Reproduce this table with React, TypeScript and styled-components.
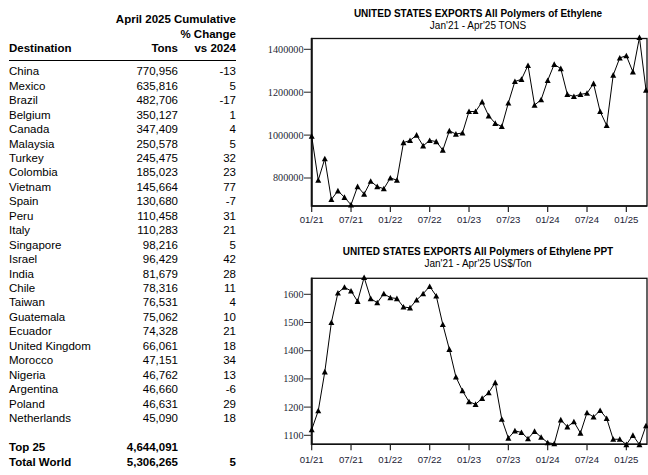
import React from "react";
import styled, { createGlobalStyle } from "styled-components";

const GlobalStyle = createGlobalStyle`
  html, body { margin: 0; padding: 0; background: #fff; }
  body { font-family: "Liberation Sans", Arial, sans-serif; color: #000; }
`;

const Page = styled.div`
  display: grid;
  grid-template-columns: 268px 380px;
  width: 648px;
  height: 475px;
  overflow: hidden;
`;

const TableWrap = styled.div`
  padding: 12.25px 0 0 9px;
  width: 227px;
  font-size: 11.5px;
`;

const HeadLine = styled.div`
  font-weight: bold;
  text-align: right;
  line-height: 14.5px;
`;

const Row = styled.div<{ $bold?: boolean; $h?: number }>`
  display: grid;
  grid-template-columns: 89px 80px 58px;
  line-height: ${(p) => p.$h ?? 14.46}px;
  font-weight: ${(p) => (p.$bold ? "bold" : "normal")};
  white-space: nowrap;
`;

const Cell = styled.span<{ $right?: boolean }>`
  text-align: ${(p) => (p.$right ? "right" : "left")};
`;

const Rule = styled.div`
  height: 1.3px;
  background: #000;
  margin: 4px 0 3.2px;
`;

const Spacer = styled.div`
  height: 14.25px;
`;

const ChartColumn = styled.div`
  display: flex;
  flex-direction: column;
  width: 380px;
`;

const ChartTitle = styled.div<{ $top: number }>`
  padding: ${(p) => p.$top}px 0 0 40px;
  text-align: center;
  font-size: 10px;
  line-height: 12px;
  white-space: nowrap;
`;

const TitleMain = styled.div`
  font-weight: bold;
`;

const TitleSub = styled.div`
  font-weight: normal;
`;

const ChartSvg = styled.svg`
  display: block;
  overflow: visible;
`;

const rows: [string, string, string][] = [
  ["China", "770,956", "-13"],
  ["Mexico", "635,816", "5"],
  ["Brazil", "482,706", "-17"],
  ["Belgium", "350,127", "1"],
  ["Canada", "347,409", "4"],
  ["Malaysia", "250,578", "5"],
  ["Turkey", "245,475", "32"],
  ["Colombia", "185,023", "23"],
  ["Vietnam", "145,664", "77"],
  ["Spain", "130,680", "-7"],
  ["Peru", "110,458", "31"],
  ["Italy", "110,283", "21"],
  ["Singapore", "98,216", "5"],
  ["Israel", "96,429", "42"],
  ["India", "81,679", "28"],
  ["Chile", "78,316", "11"],
  ["Taiwan", "76,531", "4"],
  ["Guatemala", "75,062", "10"],
  ["Ecuador", "74,328", "21"],
  ["United Kingdom", "66,061", "18"],
  ["Morocco", "47,151", "34"],
  ["Nigeria", "46,762", "13"],
  ["Argentina", "46,660", "-6"],
  ["Poland", "46,631", "29"],
  ["Netherlands", "45,090", "18"],
];

const tonsData = [
  995000, 790000, 890000, 700000, 740000, 710000, 675000, 760000, 725000, 785000,
  760000, 750000, 800000, 790000, 965000, 975000, 1000000, 950000, 975000, 970000,
  930000, 1020000, 1005000, 1010000, 1110000, 1110000, 1155000, 1090000, 1055000, 1040000,
  1150000, 1250000, 1260000, 1325000, 1140000, 1165000, 1255000, 1330000, 1310000, 1190000,
  1180000, 1190000, 1195000, 1240000, 1110000, 1045000, 1280000, 1360000, 1370000, 1295000,
  1455000, 1210000,
];

const priceData = [
  1120, 1187, 1325, 1500, 1605, 1625, 1612, 1575, 1660, 1585,
  1570, 1602, 1588, 1585, 1555, 1552, 1580, 1602, 1628, 1594,
  1493, 1405, 1307, 1258, 1219, 1210, 1231, 1251, 1287, 1157,
  1090, 1116, 1110, 1088, 1114, 1093, 1074, 1070, 1155, 1130,
  1148, 1108, 1180, 1165, 1188, 1160, 1086, 1086, 1067, 1100,
  1067, 1134,
];

const X0 = 43.7;
const DX = 6.555;
const BOX_RIGHT = 379;
const xLabels = ["01/21", "07/21", "01/22", "07/22", "01/23", "07/23", "01/24", "07/24", "01/25"];

type ChartProps = {
  data: number[];
  height: number;
  boxTop: number;
  boxBottom: number;
  refY: number;
  refV: number;
  pxPerUnit: number;
  ticks: number[];
  labelY: number;
};

function LineChart({ data, height, boxTop, boxBottom, refY, refV, pxPerUnit, ticks, labelY }: ChartProps) {
  const yOf = (v: number) => refY + (refV - v) * pxPerUnit;
  const pts = data.map((v, i) => [X0 + i * DX, yOf(v)] as const);
  const path = pts.map(([x, y], i) => `${i ? "L" : "M"}${x.toFixed(2)} ${y.toFixed(2)}`).join(" ");
  return (
    <ChartSvg width={380} height={height} viewBox={`0 0 380 ${height}`}>
      <rect x={X0} y={boxTop} width={BOX_RIGHT - X0} height={boxBottom - boxTop} fill="none" stroke="#111" strokeWidth={1.3} />
      <line x1={X0} y1={boxTop - 0.6} x2={X0} y2={boxBottom + 0.8} stroke="#111" strokeWidth={2} />
      <line x1={X0} y1={boxBottom} x2={BOX_RIGHT} y2={boxBottom} stroke="#111" strokeWidth={1.6} />
      {ticks.map((t) => {
        const y = yOf(t);
        return (
          <g key={t}>
            <line x1={36} y1={y} x2={X0} y2={y} stroke="#222" strokeWidth={1} />
            <text x={35.5} y={y + 3.4} textAnchor="end" fontFamily="'Liberation Serif', 'Times New Roman', serif" fontSize={10.2} fill="#1c1f33">
              {t}
            </text>
          </g>
        );
      })}
      {xLabels.map((l, k) => {
        const x = X0 + k * 6 * DX;
        return (
          <g key={l}>
            <line x1={x} y1={boxBottom} x2={x} y2={boxBottom + 6} stroke="#222" strokeWidth={1.2} />
            <text x={x} y={labelY + 3.5} textAnchor="middle" fontFamily="'Liberation Sans', Arial, sans-serif" fontSize={9.6} fill="#1b2236">
              {l}
            </text>
          </g>
        );
      })}
      <path d={path} fill="none" stroke="#000" strokeWidth={1} strokeLinejoin="round" />
      {pts.map(([x, y], i) => (
        <polygon key={i} points={`${x - 3},${y + 2.6} ${x + 3},${y + 2.6} ${x},${y - 3}`} fill="#000" />
      ))}
    </ChartSvg>
  );
}

export default function App() {
  return (
    <>
      <GlobalStyle />
      <Page>
        <TableWrap>
          <HeadLine>April 2025 Cumulative</HeadLine>
          <HeadLine>% Change</HeadLine>
          <Row $bold $h={14.5}>
            <Cell>Destination</Cell>
            <Cell $right>Tons</Cell>
            <Cell $right>vs 2024</Cell>
          </Row>
          <Rule />
          {rows.map(([c, t, p]) => (
            <Row key={c}>
              <Cell>{c}</Cell>
              <Cell $right>{t}</Cell>
              <Cell $right>{p}</Cell>
            </Row>
          ))}
          <Spacer />
          <Row $bold $h={15}>
            <Cell>Top 25</Cell>
            <Cell $right>4,644,091</Cell>
            <Cell $right></Cell>
          </Row>
          <Row $bold $h={15}>
            <Cell>Total World</Cell>
            <Cell $right>5,306,265</Cell>
            <Cell $right>5</Cell>
          </Row>
        </TableWrap>
        <ChartColumn>
          <ChartTitle $top={8}>
            <TitleMain>UNITED STATES EXPORTS All Polymers of Ethylene</TitleMain>
            <TitleSub>Jan'21 - Apr'25 TONS</TitleSub>
          </ChartTitle>
          <LineChart
            data={tonsData}
            height={214}
            boxTop={6.5}
            boxBottom={174}
            refY={17.3}
            refV={1400000}
            pxPerUnit={42.9 / 200000}
            ticks={[1400000, 1200000, 1000000, 800000]}
            labelY={187.3}
          />
          <ChartTitle $top={0}>
            <TitleMain>UNITED STATES EXPORTS All Polymers of Ethylene PPT</TitleMain>
            <TitleSub>Jan'21 - Apr'25 US$/Ton</TitleSub>
          </ChartTitle>
          <LineChart
            data={priceData}
            height={205}
            boxTop={8.3}
            boxBottom={174.3}
            refY={24.3}
            refV={1600}
            pxPerUnit={0.282}
            ticks={[1600, 1500, 1400, 1300, 1200, 1100]}
            labelY={189}
          />
        </ChartColumn>
      </Page>
    </>
  );
}
